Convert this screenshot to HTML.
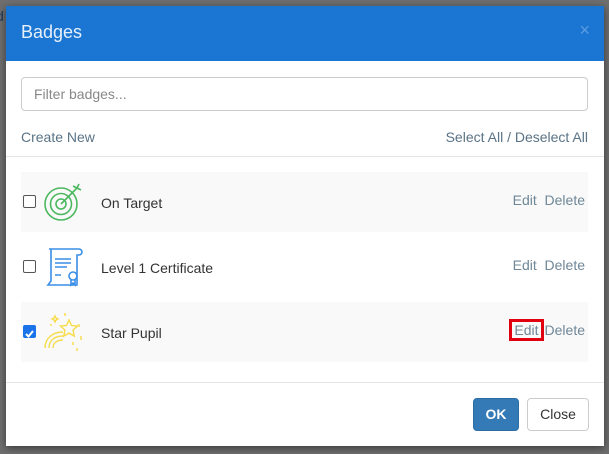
<!DOCTYPE html>
<html><head><style>
*{box-sizing:border-box;margin:0;padding:0}
body{width:609px;height:454px;background:#6f6f6f;font-family:"Liberation Sans",sans-serif;position:relative;overflow:hidden;font-size:14px}
.bg{position:absolute;left:0;top:0;color:#1e3a5f;font-size:14px}
.modal{position:absolute;left:6px;top:6px;width:598px;height:440px;background:#fff;box-shadow:0 2px 8px rgba(0,0,0,.5)}
.hdr{height:55px;background:#1a76d2;position:relative}
.hdr h4{position:absolute;left:15px;top:16px;color:#e6f0fb;font-size:18px;font-weight:normal}
.hdr .x{position:absolute;right:14px;top:14px;color:#5d9be0;font-size:18px}
.inp{position:absolute;left:15px;top:71px;width:567px;height:34px;border:1px solid #ccc;border-radius:4px;padding:8px 12px;color:#888;font-size:14px}
.lnk{position:absolute;top:123px;color:#5a7386;font-size:14px}
.hr{position:absolute;left:0;width:598px;height:1px;background:#e5e5e5}
.row{position:absolute;left:15px;width:567px;height:60px}
.row.g{background:#f9f9f9}
.cb{position:absolute;left:2px;top:23px;width:13px;height:13px;border:1px solid #555;border-radius:2px;background:#fff}
.cb.on{background:#1a73e8;border-color:#1a73e8}
.name{position:absolute;left:80px;top:23px;color:#333;font-size:14px}
.ic{position:absolute;left:22px;top:8px}
.act{position:absolute;right:3px;top:20px;color:#6f8797;font-size:14px}
.btn{position:absolute;top:392px;height:33px;border-radius:4px;font-size:14px;text-align:center;line-height:31px}
</style></head><body>
<div class="bg" style="top:8px;left:-4px">d</div>
<div class="modal">
<div class="hdr"><h4>Badges</h4><span class="x">×</span></div>
<div class="inp">Filter badges...</div>
<div class="lnk" style="left:15px">Create New</div>
<div class="lnk" style="right:16px">Select All / Deselect All</div>
<div class="hr" style="top:150px"></div>
<div class="row g" style="top:166px"><div class="cb"></div>
<svg class="ic" width="44" height="44" viewBox="0 0 44 44" fill="none" stroke="#4cb860" stroke-width="1.6"><circle cx="18" cy="24" r="16"/><circle cx="18" cy="24" r="10.5"/><circle cx="18" cy="24" r="5"/><path d="M18 24L34 8M30 6l4 2 2-4M34 8l4 2"/></svg>
<div class="name">On Target</div><div class="act">Edit&nbsp; Delete</div></div>
<div class="row" style="top:231px"><div class="cb"></div>
<svg class="ic" width="44" height="44" viewBox="0 0 44 44" fill="none" stroke="#3a8ee6" stroke-width="1.6"><path d="M6 4h30a3 3 0 0 1 0 6h-2v30H5l3-4V4z"/><path d="M12 14h16M12 18h16M12 22h12M12 30h6"/><circle cx="30" cy="31" r="4"/><path d="M28 35v5l2-2 2 2v-5"/></svg>
<div class="name">Level 1 Certificate</div><div class="act">Edit&nbsp; Delete</div></div>
<div class="row g" style="top:296px"><div class="cb on"><svg width="11" height="11" viewBox="0 0 11 11"><path d="M2 6l2.5 2.5L9 3" stroke="#fff" stroke-width="2" fill="none"/></svg></div>
<svg class="ic" width="44" height="44" viewBox="0 0 44 44" fill="none" stroke="#f6dc4a" stroke-width="1.4"><path d="M26 10l2.5 5.5 6 .6-4.5 4 1.3 6-5.3-3-5.3 3 1.3-6-4.5-4 6-.6z"/><path d="M2 38c0-10 8-16 18-16M6 38c0-8 6-12 14-12M10 38c0-5 4-8 10-8"/><path d="M12 6l1 2 2 1-2 1-1 2-1-2-2-1 2-1zM22 3v3M36 14v3M38 26v4M30 32v3M34 38v3M8 14v2"/></svg>
<div class="name">Star Pupil</div><div class="act"><span style="border:3px solid #e00010;padding:0 2px;margin-right:1px">Edit</span>Delete</div></div>
<div class="hr" style="top:376px"></div>
<div class="btn" style="left:467px;width:46px;background:#337ab7;border:1px solid #2e6da4;color:#fff;font-weight:bold">OK</div>
<div class="btn" style="left:521px;width:62px;background:#fff;border:1px solid #ccc;color:#333">Close</div>
</div>
</body></html>
